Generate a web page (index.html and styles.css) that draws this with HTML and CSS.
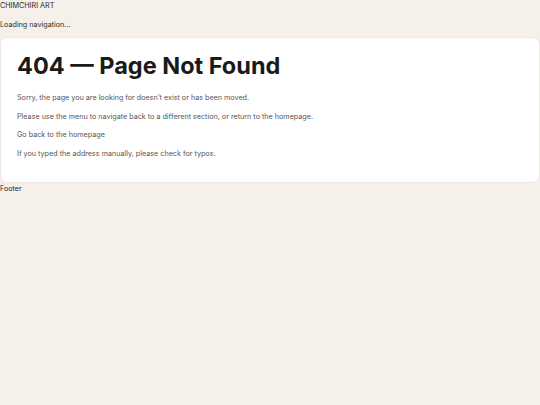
FILE: index.html
```html
<!DOCTYPE html>
<html lang="en">
<head>
<meta charset="utf-8">
<title>404 — Page Not Found</title>
<link rel="stylesheet" href="styles.css">
</head>
<body>
<header class="site-header">
  <div class="brand">CHIMCHIRI ART</div>
  <nav class="nav">Loading navigation...</nav>
</header>
<main class="card">
  <h1 class="title">404 — Page Not Found</h1>
  <p class="text">Sorry, the page you are looking for doesn’t exist or has been moved.</p>
  <p class="text">Please use the menu to navigate back to a different section, or return to the homepage.</p>
  <p class="text">Go back to the homepage</p>
  <p class="text">If you typed the address manually, please check for typos.</p>
</main>
<footer class="footer">Footer</footer>
</body>
</html>
```
FILE: styles.css
```css
html, body {
  margin: 0;
  padding: 0;
  background: #f5f0ea;
}
body {
  font-family: "Inter", "Open Sans", sans-serif;
  font-size: 7.2px;
  line-height: 11px;
  color: #2a2a2a;
}
.site-header {
  display: flex;
  flex-direction: column;
  gap: 8px;
  padding-bottom: 8px;
}
.brand, .nav {
  color: #2a2a2a;
}
.card {
  margin: 0 1px;
  background: #ffffff;
  border-radius: 6px;
  box-shadow: 0 0 0 1px #ede8e2;
  padding: 13px 16px 22.5px;
  display: flex;
  flex-direction: column;
  gap: 6.5px;
}
.title {
  margin: 0 0 4.5px;
  font-size: 23.5px;
  line-height: 30px;
  font-weight: 700;
  color: #1a1a1a;
}
.text {
  margin: 0;
  line-height: 12px;
  color: #555555;
}
.footer {
  padding-top: 1px;
  color: #2a2a2a;
}
```
